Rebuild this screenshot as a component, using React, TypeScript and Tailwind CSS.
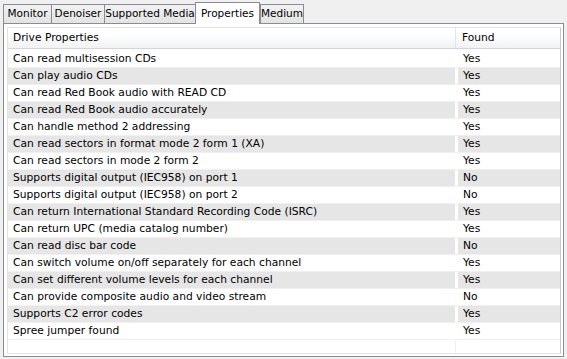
import React from 'react';

type Row = { name: string; found: string };

const rows: Row[] = [
  { name: 'Can read multisession CDs', found: 'Yes' },
  { name: 'Can play audio CDs', found: 'Yes' },
  { name: 'Can read Red Book audio with READ CD', found: 'Yes' },
  { name: 'Can read Red Book audio accurately', found: 'Yes' },
  { name: 'Can handle method 2 addressing', found: 'Yes' },
  { name: 'Can read sectors in format mode 2 form 1 (XA)', found: 'Yes' },
  { name: 'Can read sectors in mode 2 form 2', found: 'Yes' },
  { name: 'Supports digital output (IEC958) on port 1', found: 'No' },
  { name: 'Supports digital output (IEC958) on port 2', found: 'No' },
  { name: 'Can return International Standard Recording Code (ISRC)', found: 'Yes' },
  { name: 'Can return UPC (media catalog number)', found: 'Yes' },
  { name: 'Can read disc bar code', found: 'No' },
  { name: 'Can switch volume on/off separately for each channel', found: 'Yes' },
  { name: 'Can set different volume levels for each channel', found: 'Yes' },
  { name: 'Can provide composite audio and video stream', found: 'No' },
  { name: 'Supports C2 error codes', found: 'Yes' },
  { name: 'Spree jumper found', found: 'Yes' },
];

const tabs = [
  { label: 'Monitor', w: 'w-[49px]' },
  { label: 'Denoiser', w: 'w-[54px]' },
  { label: 'Supported Media', w: 'w-[92px]' },
  { label: 'Properties', w: 'w-[65px]', active: true },
  { label: 'Medium', w: 'w-[44px]' },
];

const App: React.FC = () => {
  return (
    <div className="w-[567px] h-[359px] bg-[#f0f0f0] text-[10.7px] text-black font-['DejaVu_Sans',Tahoma,sans-serif] overflow-hidden">
      {/* tab strip */}
      <div className="flex items-end h-[23px] pl-[3px] text-[10.5px] whitespace-nowrap">
        {tabs.map(t =>
          t.active ? (
            <div
              key={t.label}
              className={`${t.w} h-[22px] -mb-px relative z-10 bg-white border border-b-0 border-[#898c95] flex items-start justify-center pt-[3px]`}
            >
              {t.label}
            </div>
          ) : (
            <div
              key={t.label}
              className={`${t.w} h-[19px] -mr-px bg-gradient-to-b from-[#f2f2f2] to-[#e3e3e3] border border-b-0 border-[#898c95] flex items-center justify-center`}
            >
              {t.label}
            </div>
          )
        )}
      </div>

      {/* tab page */}
      <div className="mx-[3px] h-[334px] border border-[#898c95] bg-white pt-[3px] pl-[3px] pr-[2px] pb-[2px] flex">
        <div className="flex-1 border border-[#e3e3e3] border-r-[#c8c8c8] flex flex-col">
          {/* header */}
          <div className="flex h-[21px] border-b border-[#d5d5d5] bg-gradient-to-b from-white from-30% to-[#f1f2f4]">
            <div className="w-[448px] pl-[5px] flex items-center border-r border-[#e3e5e8]">Drive Properties</div>
            <div className="flex-1 pl-[6px] flex items-center">Found</div>
          </div>
          {/* rows */}
          <div className="flex-1 flex flex-col pt-[2px]">
            {rows.map((r, i) => (
              <div key={r.name} className="flex h-[17px] border-b border-[#f0f0f0]">
                <div
                  className={`w-[447px] pl-[5px] flex items-center whitespace-nowrap ${i % 2 ? 'bg-[#e6e6e6]' : ''}`}
                >
                  {r.name}
                </div>
                <div className="w-[3px]" />
                <div className={`flex-1 pl-[5px] flex items-center ${i % 2 ? 'bg-[#e6e6e6]' : ''}`}>
                  {r.found}
                </div>
              </div>
            ))}
            <div className="flex flex-1">
              <div className="w-[448px] border-r border-[#f0f0f0]" />
              <div className="flex-1" />
            </div>
          </div>
        </div>
      </div>
    </div>
  );
};

export default App;
